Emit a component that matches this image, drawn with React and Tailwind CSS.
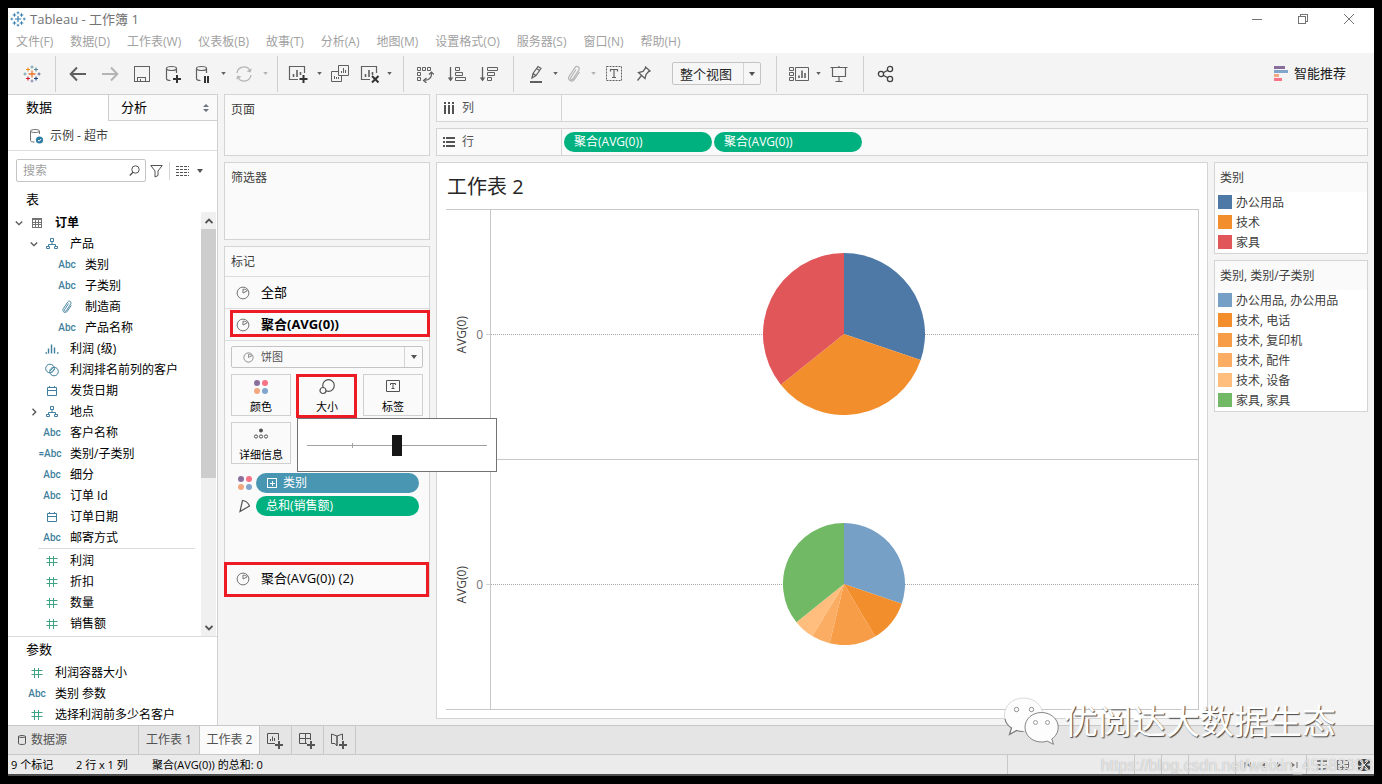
import { useState } from "react";
import clsx from "clsx";

const MENUS = [
  "文件(F)",
  "数据(D)",
  "工作表(W)",
  "仪表板(B)",
  "故事(T)",
  "分析(A)",
  "地图(M)",
  "设置格式(O)",
  "服务器(S)",
  "窗口(N)",
  "帮助(H)",
];

const DIMENSIONS = [
  { label: "订单", icon: "table", level: 0, open: true, bold: true },
  { label: "产品", icon: "hierarchy", level: 1, open: true },
  { label: "类别", icon: "abc", level: 2 },
  { label: "子类别", icon: "abc", level: 2 },
  { label: "制造商", icon: "clip", level: 2 },
  { label: "产品名称", icon: "abc", level: 2 },
  { label: "利润 (级)", icon: "bins", level: 1 },
  { label: "利润排名前列的客户", icon: "set", level: 1 },
  { label: "发货日期", icon: "date", level: 1 },
  { label: "地点", icon: "hierarchy", level: 1, open: false },
  { label: "客户名称", icon: "abc", level: 1 },
  { label: "类别/子类别", icon: "calcAbc", level: 1 },
  { label: "细分", icon: "abc", level: 1 },
  { label: "订单 Id", icon: "abc", level: 1 },
  { label: "订单日期", icon: "date", level: 1 },
  { label: "邮寄方式", icon: "abc", level: 1 },
];

const MEASURES = ["利润", "折扣", "数量", "销售额"].map((label) => ({
  label,
  icon: "number",
  level: 1,
}));

const PARAMETERS = [
  { label: "利润容器大小", icon: "number", level: 0 },
  { label: "类别 参数", icon: "abc", level: 0 },
  { label: "选择利润前多少名客户", icon: "number", level: 0 },
];

const CATEGORY_LEGEND = [
  { label: "办公用品", color: "#4e79a7" },
  { label: "技术", color: "#f28e2b" },
  { label: "家具", color: "#e15759" },
];

const SUBCATEGORY_LEGEND = [
  { label: "办公用品, 办公用品", color: "#76a0c6" },
  { label: "技术, 电话", color: "#f28e2b" },
  { label: "技术, 复印机", color: "#f79d48" },
  { label: "技术, 配件", color: "#fbad63" },
  { label: "技术, 设备", color: "#ffbe7d" },
  { label: "家具, 家具", color: "#72b966" },
];

// slice ends, in degrees clockwise from 12 o'clock
const CATEGORY_SLICES = [
  { end: 108.8, color: "#4e79a7" },
  { end: 231.3, color: "#f28e2b" },
  { end: 360, color: "#e15759" },
];

const SUBCATEGORY_SLICES = [
  { end: 108.8, color: "#76a0c6" },
  { end: 149.3, color: "#f28e2b" },
  { end: 193.6, color: "#f79d48" },
  { end: 211.4, color: "#fbad63" },
  { end: 231.3, color: "#ffbe7d" },
  { end: 360, color: "#72b966" },
];

const INDENT = ["pl-1", "pl-[19px]", "pl-[34px]"];

/* ---------- icons ---------- */

function Svg({ w = 18, h = 18, crisp, children, ...rest }) {
  return (
    <svg
      width={w}
      height={h}
      viewBox={`0 0 ${w} ${h}`}
      fill="none"
      stroke="currentColor"
      shapeRendering={crisp ? "crispEdges" : undefined}
      aria-hidden="true"
      className="shrink-0"
      {...rest}
    >
      {children}
    </svg>
  );
}

function TableauMark({ mono, size = 18 }) {
  const c = (color) => (mono ? "#2f7cab" : color);
  return (
    <svg width={size} height={size} viewBox="0 0 18 18" fill="none" aria-hidden="true" className="shrink-0">
      <path d="M9 5.5v7M5.5 9h7" stroke={c("#e8762b")} strokeWidth="1.3" />
      <path d="M5 2.5v4M3 4.5h4" stroke={c("#eb912c")} strokeWidth="1.1" />
      <path d="M13 2.5v4M11 4.5h4" stroke={c("#59879b")} strokeWidth="1.1" />
      <path d="M5 11.5v4M3 13.5h4" stroke={c("#c72035")} strokeWidth="1.1" />
      <path d="M13 11.5v4M11 13.5h4" stroke={c("#1f447e")} strokeWidth="1.1" />
      <path d="M9 .5v3M7.5 2h3" stroke={c("#7199a6")} />
      <path d="M9 14.5v3M7.5 16h3" stroke={c("#7b84b0")} />
      <path d="M2 7.5v3M.5 9h3" stroke={c("#6fa0ab")} />
      <path d="M16 7.5v3M14.5 9h3" stroke={c("#5c6692")} />
    </svg>
  );
}

function CaretIcon({ small }) {
  return (
    <svg
      width={small ? 5 : 6}
      height={small ? 3 : 4}
      viewBox="0 0 6 4"
      fill="currentColor"
      aria-hidden="true"
      className="shrink-0"
    >
      <path d="M0 0h6L3 4z" />
    </svg>
  );
}

function ArrowIcon({ flip }) {
  return (
    <Svg strokeWidth="2">
      <path d={flip ? "M1 9h15M10 2.500l6.300 6.500-6.300 6.500" : "M17 9H2M8 2.500L1.700 9 8 15.500"} />
    </Svg>
  );
}

function SaveIcon() {
  return (
    <Svg crisp>
      <path d="M1.5 1.5h15v15h-15zM4.500 16.500v-4h8v4M7 14v2.500" />
    </Svg>
  );
}

function Cylinder() {
  return (
    <path d="M11.500 8V3.500c0-1.100-2.200-2-5-2s-5 .9-5 2v10c0 1.100 1.500 2 4 2M1.500 3.500c0 1.100 2.200 2 5 2s5-.9 5-2" strokeWidth="1.2" />
  );
}

function AddSourceIcon() {
  return (
    <Svg>
      <Cylinder />
      <path d="M12 10v8M8 14h8" stroke="#333" strokeWidth="2" />
    </Svg>
  );
}

function PauseSourceIcon() {
  return (
    <Svg>
      <Cylinder />
      <path d="M10 11v7M13 11v7" stroke="#333" strokeWidth="2" />
    </Svg>
  );
}

function RefreshIcon() {
  return (
    <Svg strokeWidth="1.3">
      <path d="M2 8a7 7 0 0 1 13-2.500M16 10a7 7 0 0 1-13 2.500" />
      <path d="M16.800 3.500l-1.300 4-4-1.200zM1.200 14.500l1.300-4 4 1.200z" fill="currentColor" stroke="none" />
    </Svg>
  );
}

function SheetIcon({ mark }) {
  return (
    <Svg w={20} h={18}>
      <path d="M16.500 8V1.500h-15v13H10" strokeWidth="1.2" />
      <path d="M5.500 12V9M9 12V5M12.500 10V7" strokeWidth="1.6" />
      {mark === "x" ? (
        <path d="M12 11l6.500 6.500M18.500 11L12 17.500" stroke="#333" strokeWidth="2" />
      ) : (
        <path d="M15.500 10v8M11.500 14h8" stroke="#333" strokeWidth="2" />
      )}
    </Svg>
  );
}

function DuplicateIcon() {
  return (
    <Svg>
      <path d="M7.500.5h10v10h-10zM7 6.500H.5v10h10V11" />
      <path d="M10.500 8V6M12.500 8V3M14.500 8V5M3.500 14v-3M5.500 14v-2M7.500 14v-2" />
    </Svg>
  );
}

function SwapIcon() {
  return (
    <Svg>
      <path d="M1.500 2.500h3v3h-3zM6.500 2.500h3v3h-3zM11.500 2.500h3v3h-3zM1.500 7.500h3v3h-3zM1.500 12.500h3v3h-3z" />
      <path d="M15.500 8c.3 4-2 7-7 7.500M13 9.500L15.500 7 18 9.500M10.500 13l-3 2.500 3 2.500" strokeWidth="1.2" />
    </Svg>
  );
}

function SortIcon({ desc }) {
  return (
    <Svg w={20}>
      <path d="M3.500 2v13" strokeWidth="1.3" />
      <path d="M.8 12.500h5.400L3.500 16.500z" fill="currentColor" stroke="none" />
      <path
        d={
          desc
            ? "M8.500 2.500h10v3h-10zM8.500 7.500h7v3h-7zM8.500 12.500h4v3h-4z"
            : "M8.500 2.500h4v3h-4zM8.500 7.500h7v3h-7zM8.500 12.500h10v3h-10z"
        }
      />
    </Svg>
  );
}

function PenIcon() {
  return (
    <Svg>
      <path d="M5 13l1-4.500L11 1.500l3 2-5 7L5 13zM6 8.500l3 2M9.500 3.500l3 2" strokeWidth="1.2" />
      <path d="M3 17h12" strokeWidth="2" />
    </Svg>
  );
}

function ClipIcon({ size = 18 }) {
  return (
    <Svg w={size} h={size} viewBox="0 0 18 18" strokeWidth="1.2">
      <path d="M11 4.500l-5.200 8c-1 1.700 1.200 3 2.200 1.400l5.800-8.800c1.600-2.800-2-5.100-3.900-2.500L4.200 11.200c-2.200 3.600 2.600 7 5.200 3.200L14.500 7" />
    </Svg>
  );
}

function TextBoxIcon() {
  return (
    <Svg>
      <rect x="1.500" y="1.500" width="15" height="14" strokeDasharray="2 1" />
      <path d="M5.500 6.500v-2h7v2M9 4.500v8M7 12.500h4" strokeWidth="1.2" />
    </Svg>
  );
}

function PinIcon() {
  return (
    <Svg>
      <path d="M10 1.500l5.500 5M11 2.500L8 6.500 3.500 7.500l6.500 6L11 9.500l3.500-4M6.500 10.500L2.500 15.500" strokeWidth="1.3" />
    </Svg>
  );
}

function CardsIcon() {
  return (
    <Svg w={20} h={16}>
      <path d="M.5 1.500h4v3h-4zM.5 6.500h4v3h-4zM.5 11.500h4v3h-4zM6.500 1.500h13v13h-13z" />
      <path d="M10 12V9.500M13 12V4.500M16 12V7" strokeWidth="1.6" />
    </Svg>
  );
}

function PresentIcon() {
  return (
    <Svg>
      <path d="M.5 2.500h17M2.500 2.500v9h13v-9M9 11.500v5M5.500 16.500h7M9 1v1" strokeWidth="1.2" />
    </Svg>
  );
}

function ShareIcon() {
  return (
    <Svg strokeWidth="1.3">
      <circle cx="4" cy="9" r="2.600" />
      <circle cx="13" cy="4" r="2.600" />
      <circle cx="13" cy="14" r="2.600" />
      <path d="M6.200 7.700l4.600-2.500M6.200 10.300l4.600 2.500" />
    </Svg>
  );
}

function PieIcon({ size = 14 }) {
  return (
    <Svg w={size} h={size} viewBox="0 0 14 14">
      <circle cx="7" cy="7" r="5.900" />
      <path d="M7 7V3.200c2 0 3.700.6 4.300 1.600L7 7z" />
    </Svg>
  );
}

function ColorDots() {
  return (
    <svg width="16" height="16" viewBox="0 0 16 16" aria-hidden="true" className="shrink-0">
      <circle cx="4" cy="4" r="3" fill="#8a6f9c" />
      <circle cx="12" cy="4" r="3" fill="#fa7285" />
      <circle cx="4" cy="12" r="3" fill="#f2a77f" />
      <circle cx="12" cy="12" r="3" fill="#82a5cc" />
    </svg>
  );
}

function SizeIcon() {
  return (
    <Svg w={16} h={16}>
      <circle cx="9.500" cy="6.500" r="5.800" strokeWidth="1.2" />
      <circle cx="4" cy="11.500" r="3" fill="#fafafa" strokeWidth="1.2" />
    </Svg>
  );
}

function LabelIcon() {
  return (
    <Svg w={14} h={14}>
      <path d="M.5 1.500h13v11h-13z" />
      <path d="M4.500 6V4.500h5V6M7 4.500v5M5.500 9.500h3" />
    </Svg>
  );
}

function DetailIcon() {
  return (
    <Svg w={16} h={14}>
      <circle cx="8" cy="3.500" r="2" fill="currentColor" stroke="none" />
      <circle cx="3" cy="9.500" r="1.600" />
      <circle cx="8" cy="9.500" r="1.600" />
      <circle cx="13" cy="9.500" r="1.600" />
    </Svg>
  );
}

function AngleIcon() {
  return (
    <Svg w={14} h={14}>
      <path d="M4.500 1.500L2 12.500l9.500-5.500C10 3.500 7.500 1.800 4.500 1.500z" strokeWidth="1.2" />
    </Svg>
  );
}

function ChevronIcon({ open }) {
  return (
    <Svg w={8} h={8} strokeWidth="1.3" className="shrink-0 text-neutral-600">
      <path d={open ? "M.8 2.500L4 5.700l3.200-3.200" : "M2.500.8L5.700 4 2.500 7.200"} />
    </Svg>
  );
}

function FieldIcon({ type }) {
  switch (type) {
    case "abc":
      return <span className="font-[Roboto] text-[10px] font-medium text-[#3f7f9d]">Abc</span>;
    case "calcAbc":
      return <span className="-ml-1 font-[Roboto] text-[10px] font-medium text-[#3f7f9d]">=Abc</span>;
    case "number":
      return (
        <Svg w={12} h={12} className="text-[#42a284]">
          <path d="M3.500 1v10M7.500 1v10M.5 3.500h11M.5 7.500h11" />
        </Svg>
      );
    case "date":
      return (
        <Svg w={12} h={12} className="text-[#3f7f9d]">
          <path d="M1.500 2.500h9v8h-9zM1.500 5.500h9M3.500 1v2M8.500 1v2" />
        </Svg>
      );
    case "hierarchy":
      return (
        <Svg w={12} h={12} className="text-[#3f7f9d]">
          <path d="M4.500.5h3v3h-3zM.5 8.500h3v2h-3zM8.500 8.500h3v2h-3zM6 3.500v3M2.500 8V6.500h7V8" />
        </Svg>
      );
    case "bins":
      return (
        <Svg w={14} h={12} className="text-[#3f7f9d]">
          <path d="M.5 10h1.500M3.500 10.500v-5M6.500 10.500v-9M9.500 10.500v-6M12 10h1.500" strokeWidth="1.4" />
        </Svg>
      );
    case "set":
      return (
        <Svg w={14} h={14} className="text-[#3f7f9d]">
          <circle cx="5" cy="5.500" r="4.300" />
          <circle cx="9" cy="8.500" r="4.300" />
          <path d="M5 8l4-4M6 9.500L10 5.500" strokeWidth=".8" />
        </Svg>
      );
    case "clip":
      return (
        <span className="text-[#3f7f9d]">
          <ClipIcon size={14} />
        </span>
      );
    default:
      return (
        <Svg w={12} h={12} crisp className="text-neutral-500">
          <path d="M1.500 1.500h9v9h-9zM1 2.500h10M1.500 5.500h9M1.500 7.500h9M4.500 3v8M7.500 3v8" />
        </Svg>
      );
  }
}

function NewTabIcon({ kind }) {
  return (
    <Svg w={17} h={17}>
      {kind === "sheet" && <path d="M11.500 8V1.500H.5v10H8M3.500 9V7M5.500 9V4.500M7.500 9V6" />}
      {kind === "dashboard" && <path d="M11.500 8V1.500H.5v10H8M.5 6.500h11M6.500 1.500v10" />}
      {kind === "story" && <path d="M6 4L.5 2v9.500H4L6 14zM6 4l5.500-2v6M6 4v9" />}
      <path d="M12 9v8M8 13h8" stroke="#555" strokeWidth="2" />
    </Svg>
  );
}

/* ---------- chrome ---------- */

function TitleBar() {
  return (
    <header className="bg-white text-neutral-400">
      <div className="flex h-[22px] items-center pl-[2px]">
        <TableauMark mono size={16} />
        <h1 className="ml-1 text-[13px] leading-5 text-neutral-500">Tableau - 工作簿 1</h1>
        <div className="ml-auto flex items-center pr-0.5 text-neutral-500">
          <button type="button" aria-label="最小化" className="flex w-[46px] justify-center">
            <Svg w={10} h={10} crisp><path d="M0 5.500h10" /></Svg>
          </button>
          <button type="button" aria-label="还原" className="flex w-[46px] justify-center">
            <Svg w={10} h={10} crisp><path d="M.5 2.500h7v7h-7zM2.500 2.500v-2h7v7h-2" /></Svg>
          </button>
          <button type="button" aria-label="关闭" className="flex w-[46px] justify-center">
            <Svg w={10} h={10}><path d="M0 0l10 10M10 0L0 10" /></Svg>
          </button>
        </div>
      </div>
      <nav className="flex h-[23px] items-center gap-[17px] pt-px pl-2 text-xs">
        {MENUS.map((menu) => (
          <button key={menu} type="button">{menu}</button>
        ))}
      </nav>
    </header>
  );
}

function Tool({ label, narrow, muted, children }) {
  return (
    <button
      type="button"
      aria-label={label}
      className={clsx("flex h-8 items-center justify-center", narrow ? "w-7" : "w-8", muted && "text-[#b4b4b4]")}
    >
      {children}
    </button>
  );
}

function ToolCaret({ label, muted }) {
  return (
    <button
      type="button"
      aria-label={label}
      className={clsx("flex h-8 w-2.5 items-center justify-center", muted && "text-[#b4b4b4]")}
    >
      <CaretIcon small />
    </button>
  );
}

function ToolGroup({ className, children }) {
  return <div className={clsx("flex h-9 items-center border-r border-[#cfcfcf]", className)}>{children}</div>;
}

function Toolbar() {
  return (
    <div className="flex h-[41px] items-center bg-[#f4f4f4] text-[#606060]">
      <ToolGroup className="w-12 justify-center">
        <TableauMark />
      </ToolGroup>
      <ToolGroup className="pr-[7px] pl-1.5">
        <Tool label="撤消"><ArrowIcon /></Tool>
        <Tool label="重做" muted><ArrowIcon flip /></Tool>
        <Tool label="保存"><SaveIcon /></Tool>
        <Tool label="新建数据源"><AddSourceIcon /></Tool>
        <Tool label="暂停自动更新" narrow><PauseSourceIcon /></Tool>
        <ToolCaret label="自动更新选项" />
        <Tool label="运行更新" muted><RefreshIcon /></Tool>
        <ToolCaret label="更新选项" muted />
      </ToolGroup>
      <ToolGroup className="pr-[9px] pl-1">
        <Tool label="新建工作表"><SheetIcon mark="plus" /></Tool>
        <ToolCaret label="新建选项" />
        <Tool label="复制"><DuplicateIcon /></Tool>
        <Tool label="清除工作表" narrow><SheetIcon mark="x" /></Tool>
        <ToolCaret label="清除选项" />
      </ToolGroup>
      <ToolGroup className="pr-2 pl-[5px]">
        <Tool label="交换行和列"><SwapIcon /></Tool>
        <Tool label="升序排序"><SortIcon /></Tool>
        <Tool label="降序排序"><SortIcon desc /></Tool>
      </ToolGroup>
      <ToolGroup className="pr-[15px] pl-2">
        <Tool label="突出显示" narrow><PenIcon /></Tool>
        <ToolCaret label="突出显示选项" />
        <Tool label="组成员" narrow muted><ClipIcon /></Tool>
        <ToolCaret label="分组选项" muted />
        <Tool label="显示标记标签"><TextBoxIcon /></Tool>
        <Tool label="固定轴" narrow><PinIcon /></Tool>
        <div className="relative ml-3.5 text-neutral-600">
          <select
            aria-label="适合"
            className="block h-[23px] w-[89px] appearance-none rounded-xs border border-[#c4c4c4] bg-[#f6f6f6] pl-[7px] text-[13px] leading-5 text-neutral-800"
          >
            <option>整个视图</option>
          </select>
          <span className="pointer-events-none absolute inset-y-px right-px flex w-[17px] items-center justify-center border-l border-neutral-300">
            <CaretIcon />
          </span>
        </div>
      </ToolGroup>
      <ToolGroup className="pr-2 pl-2">
        <Tool label="显示/隐藏功能区" narrow><CardsIcon /></Tool>
        <ToolCaret label="功能区选项" />
        <Tool label="演示模式"><PresentIcon /></Tool>
      </ToolGroup>
      <div className="pl-1.5 text-neutral-700">
        <Tool label="共享"><ShareIcon /></Tool>
      </div>
      <button type="button" className="mr-7 ml-auto flex items-center gap-1.5 text-[13px] text-neutral-900">
        <svg width="14" height="15" viewBox="0 0 14 15" aria-hidden="true">
          <path d="M0 0h11v3H0z" fill="#8a6f9c" />
          <path d="M0 4h14v3H0z" fill="#82a5cc" />
          <path d="M0 8h5v3H0z" fill="#f2a77f" />
          <path d="M0 12h8v3H0z" fill="#fa7285" />
        </svg>
        智能推荐
      </button>
    </div>
  );
}

/* ---------- data pane ---------- */

function FieldRow({ field }) {
  return (
    <li className={clsx("flex h-[21px] items-center", INDENT[field.level])}>
      <span className="flex w-3.5 shrink-0 justify-center">
        {field.open !== undefined && <ChevronIcon open={field.open} />}
      </span>
      <span className="flex w-[22px] shrink-0 justify-center whitespace-nowrap">
        <FieldIcon type={field.icon} />
      </span>
      <span className={clsx("ml-[7px] whitespace-nowrap", field.bold && "font-bold")}>{field.label}</span>
    </li>
  );
}

function DataPane() {
  return (
    <aside className="flex w-[210px] shrink-0 flex-col border-t border-r border-[#d0d0d0] bg-white text-xs text-black">
      <div className="flex h-[26px] text-[13px]">
        <button type="button" className="w-[100px] pl-[18px] text-left">数据</button>
        <button
          type="button"
          className="flex flex-1 items-center justify-between border-b border-l border-[#d0d0d0] bg-[#fafafa] pr-2 pl-3"
        >
          分析
          <svg width="6" height="8" viewBox="0 0 6 8" fill="#6b7280" aria-hidden="true">
            <path d="M3 0l3 3H0zM3 8L0 5h6z" />
          </svg>
        </button>
      </div>
      <div className="flex h-[30px] items-center gap-1.5 border-b border-[#dcdcdc] pl-[22px] text-neutral-700">
        <Svg w={14} h={16} className="shrink-0 text-neutral-500">
          <path d="M9.500 6V3c0-.8-2-1.500-4.500-1.500S.5 2.200.5 3v9.500c0 1 1.500 1.500 4 1.500M.5 3c0 1 2 1.500 4.500 1.500S9.500 4 9.500 3" />
          <circle cx="9.500" cy="12" r="3.600" fill="#2f7ca3" stroke="none" />
          <path d="M8 12l1.200 1.200 2-2.200" stroke="#fff" />
        </Svg>
        示例 - 超市
      </div>
      <div className="flex items-center pt-2 pl-2">
        <div className="relative">
          <input
            type="search"
            aria-label="搜索"
            placeholder="搜索"
            className="block h-[23px] w-[130px] rounded-xs border border-[#c4c4c4] pr-6 pl-1.5 placeholder:text-neutral-400"
          />
          <span className="pointer-events-none absolute inset-y-0 right-1.5 flex items-center text-neutral-600">
            <Svg w={11} h={11}>
              <circle cx="6.500" cy="4.500" r="3.700" />
              <path d="M4 7.200L.8 10.500" strokeWidth="1.3" />
            </Svg>
          </span>
        </div>
        <button type="button" aria-label="筛选" className="ml-1 text-neutral-600">
          <Svg w={13} h={14}><path d="M.8 1.500h11.400L8 7v4.500l-3 1.500V7z" /></Svg>
        </button>
        <button type="button" aria-label="视图" className="ml-1.5 flex h-[18px] items-center gap-2 border-l border-neutral-300 pl-1.5 text-neutral-600">
          <Svg w={13} h={10} crisp>
            <path d="M0 .5h13M0 3.500h13M0 6.500h13M0 9.500h13" strokeDasharray="3 1" />
          </Svg>
          <CaretIcon />
        </button>
      </div>
      <h2 className="flex h-[30px] items-center pt-1.5 pl-[18px] text-[13px]">表</h2>
      <div className="flex flex-1">
        <div className="flex-1">
          <ul>
            {DIMENSIONS.map((field) => <FieldRow key={field.label} field={field} />)}
          </ul>
          <ul className="mr-1.5 ml-[30px] border-t border-[#dcdcdc]" />
          <ul className="pt-px">
            {MEASURES.map((field) => <FieldRow key={field.label} field={field} />)}
          </ul>
        </div>
        <div className="mr-px flex w-[15px] shrink-0 flex-col items-center bg-[#f0f0f0] text-neutral-600">
          <span className="flex h-[17px] items-center">
            <Svg w={8} h={8} strokeWidth="1.8"><path d="M.5 6L4 2.500 7.500 6" /></Svg>
          </span>
          <span className="h-[249px] w-full bg-[#cdcdcd]" />
          <span className="mt-auto flex h-[17px] items-center">
            <Svg w={8} h={8} strokeWidth="1.8"><path d="M.5 2L4 5.500 7.500 2" /></Svg>
          </span>
        </div>
      </div>
      <section className="border-t border-[#dcdcdc]">
        <h2 className="flex h-[25px] items-center pl-[18px] text-[13px]">参数</h2>
        <ul>
          {PARAMETERS.map((field) => <FieldRow key={field.label} field={field} />)}
        </ul>
      </section>
    </aside>
  );
}

/* ---------- cards ---------- */

function MarkButton({ label, icon, highlight }) {
  return (
    <button
      type="button"
      className="relative flex h-[42px] w-[60px] flex-col items-center justify-between border border-[#d0d0d0] pt-1 text-neutral-600"
    >
      {icon}
      <span className="text-[11px] leading-4 text-black">{label}</span>
      {highlight && <span className="absolute -top-px -right-px -bottom-[3px] -left-0.5 border-3 border-[#ed1c24]" />}
    </button>
  );
}

function SizePopup({ value, onChange }) {
  return (
    <div className="absolute top-[44px] left-[66px] z-10 flex h-[54px] w-[200px] items-center border border-neutral-500 bg-white px-[9px]">
      <div className="relative flex w-full items-center">
        <span className="absolute inset-x-0 h-px bg-neutral-400" />
        <span className="absolute left-1/4 h-[5px] w-px bg-neutral-400" />
        <input
          type="range"
          aria-label="大小"
          min="0"
          max="100"
          value={value}
          onChange={(e) => onChange(e.target.value)}
          className="relative m-0 h-[22px] w-full appearance-none bg-transparent [&::-webkit-slider-thumb]:h-[21px] [&::-webkit-slider-thumb]:w-[10px] [&::-webkit-slider-thumb]:appearance-none [&::-webkit-slider-thumb]:rounded-none [&::-webkit-slider-thumb]:bg-[#161616]"
        />
      </div>
    </div>
  );
}

function MarksCard() {
  const [size, setSize] = useState("50");
  return (
    <section className="border border-[#d4d4d4] bg-[#fafafa]">
      <h2 className="flex h-[30px] items-center border-b border-[#dcdcdc] pl-1.5">标记</h2>
      <button type="button" className="flex h-8 w-full items-center gap-[11px] border-b border-[#dcdcdc] pl-[11px] text-[13px] text-neutral-500">
        <PieIcon />
        <span className="text-black">全部</span>
      </button>
      <button type="button" className="relative flex h-8 w-full items-center gap-[11px] border-b border-[#dcdcdc] pl-[11px] text-[13px] font-bold text-neutral-500">
        <PieIcon />
        <span className="text-black">聚合(AVG(0))</span>
        <span className="absolute top-px -right-px bottom-[3px] left-[5px] border-3 border-[#ed1c24]" />
      </button>
      <div className="px-1.5 pt-[5px]">
        <div className="relative text-neutral-600">
          <select
            aria-label="标记类型"
            className="block h-[22px] w-full appearance-none rounded-xs border border-[#c4c4c4] bg-[#fafafa] pl-[29px] text-[11px] text-neutral-600"
          >
            <option>饼图</option>
          </select>
          <span className="pointer-events-none absolute inset-y-0 left-3 flex items-center text-neutral-500">
            <PieIcon size={11} />
          </span>
          <span className="pointer-events-none absolute inset-y-px right-px flex w-[18px] items-center justify-center border-l border-neutral-300">
            <CaretIcon />
          </span>
        </div>
        <div className="relative mt-1.5 flex flex-wrap gap-1.5">
          <MarkButton label="颜色" icon={<ColorDots />} />
          <MarkButton label="大小" icon={<SizeIcon />} highlight />
          <MarkButton label="标签" icon={<LabelIcon />} />
          <MarkButton label="详细信息" icon={<DetailIcon />} />
          <SizePopup value={size} onChange={setSize} />
        </div>
        <ul className="mt-[9px] mb-[46px] space-y-[3px] pr-1 pl-1.5 text-white">
          <li className="flex items-center gap-[3px]">
            <ColorDots />
            <button type="button" className="flex h-5 flex-1 items-center gap-1.5 rounded-full bg-[#4996b2] pl-[11px]">
              <Svg w={10} h={10} crisp><path d="M.5.5h9v9h-9zM5 2.500v5M2.500 5h5" /></Svg>
              类别
            </button>
          </li>
          <li className="flex items-center gap-[3px]">
            <span className="flex w-4 justify-center text-neutral-600"><AngleIcon /></span>
            <button type="button" className="flex h-5 flex-1 items-center rounded-full bg-[#00b180] pl-2.5">
              总和(销售额)
            </button>
          </li>
        </ul>
      </div>
      <button type="button" className="relative flex h-[34px] w-full items-center gap-[11px] pl-[11px] text-[13px] text-neutral-500">
        <PieIcon />
        <span className="text-black">聚合(AVG(0)) (2)</span>
        <span className="absolute top-0 right-0 -bottom-px -left-px border-3 border-[#ed1c24]" />
      </button>
    </section>
  );
}

function CardColumn() {
  return (
    <div className="flex w-[206px] shrink-0 flex-col gap-1.5 text-xs text-neutral-700">
      <section className="h-[62px] border border-[#d4d4d4] bg-[#fafafa] pt-[7px] pl-1.5">
        <h2>页面</h2>
      </section>
      <section className="h-[78px] border border-[#d4d4d4] bg-[#fafafa] pt-[7px] pl-1.5">
        <h2>筛选器</h2>
      </section>
      <MarksCard />
    </div>
  );
}

/* ---------- view ---------- */

function Shelf({ label, icon, pills = [] }) {
  return (
    <section className="flex h-7 border border-[#d4d4d4] bg-[#fafafa] text-xs">
      <h2 className="flex w-[125px] items-center gap-[7px] border-r border-[#d4d4d4] pl-1.5 text-neutral-600">
        {icon}
        {label}
      </h2>
      <div className="flex items-center gap-0.5 pl-0.5">
        {pills.map((pill, i) => (
          <button key={i} type="button" className="h-5 w-[148px] rounded-full bg-[#00b180] pl-2.5 text-left text-white">
            {pill}
          </button>
        ))}
      </div>
    </section>
  );
}

function Pie({ radius, slices }) {
  const point = (deg) => {
    const rad = (deg * Math.PI) / 180;
    return `${radius + radius * Math.sin(rad)} ${radius - radius * Math.cos(rad)}`;
  };
  return (
    <svg width={radius * 2} height={radius * 2} className="relative" role="img" aria-label="饼图">
      {slices.map(({ end, color }, i) => {
        const start = i === 0 ? 0 : slices[i - 1].end;
        return (
          <path
            key={color}
            d={`M${radius} ${radius}L${point(start)}A${radius} ${radius} 0 ${end - start > 180 ? 1 : 0} 1 ${point(end)}Z`}
            fill={color}
          />
        );
      })}
    </svg>
  );
}

function ChartRow({ radius, slices }) {
  return (
    <div className="flex flex-1 border-b border-[#c8c8c8]">
      <div className="flex w-[45px] items-center border-r border-[#c8c8c8] text-xs text-neutral-700">
        <span className="ml-2 rotate-180 [writing-mode:vertical-rl]">AVG(0)</span>
        <span className="ml-auto pr-[3px] text-neutral-500">0</span>
        <span className="h-px w-1 bg-neutral-300" />
      </div>
      <div className="relative flex flex-1 items-center justify-center border-r border-[#c8c8c8] pr-px pb-px">
        <span className="absolute inset-x-0 border-t border-dotted border-[#a8a8a8]" />
        <Pie radius={radius} slices={slices} />
      </div>
    </div>
  );
}

function Legend({ title, items }) {
  return (
    <section className="border border-[#d4d4d4] bg-white pb-px text-xs text-neutral-700">
      <h2 className="flex h-[29px] items-center bg-[#fafafa] pl-[5px]">{title}</h2>
      <ul>
        {items.map((item) => (
          <li key={item.label} className="flex h-5 items-center gap-1 pl-[3px]">
            <span className="size-3.5" style={{ backgroundColor: item.color }} />
            <span className="pt-px">{item.label}</span>
          </li>
        ))}
      </ul>
    </section>
  );
}

function Workspace() {
  return (
    <main className="flex min-w-0 flex-1 flex-col gap-1.5">
      <Shelf
        label="列"
        icon={<Svg w={12} h={12} crisp strokeWidth="2"><path d="M2 0v2M2 3v9M6 0v2M6 3v9M10 0v2M10 3v9" /></Svg>}
      />
      <Shelf
        label="行"
        icon={<Svg w={12} h={12} crisp strokeWidth="2"><path d="M0 2h2M3 2h9M0 6h2M3 6h9M0 10h2M3 10h9" /></Svg>}
        pills={["聚合(AVG(0))", "聚合(AVG(0))"]}
      />
      <div className="flex flex-1 items-stretch gap-1.5">
        <section className="mb-1.5 flex flex-1 flex-col border border-[#d4d4d4] bg-white pr-2 pb-2 pl-[9px]">
          <h2 className="flex h-[46px] items-center pt-0.5 pl-px text-xl text-neutral-800">工作表 2</h2>
          <div className="flex flex-1 flex-col border-t border-[#c8c8c8]">
            <ChartRow radius={81} slices={CATEGORY_SLICES} />
            <ChartRow radius={61} slices={SUBCATEGORY_SLICES} />
          </div>
        </section>
        <div className="flex w-[154px] shrink-0 flex-col gap-1.5">
          <Legend title="类别" items={CATEGORY_LEGEND} />
          <Legend title="类别, 类别/子类别" items={SUBCATEGORY_LEGEND} />
        </div>
      </div>
    </main>
  );
}

/* ---------- footer ---------- */

function SheetTabs() {
  return (
    <div className="flex h-[30px] border-t border-b border-[#c8c8c8] bg-[#e5e5e5] text-xs text-neutral-600">
      <button type="button" className="flex w-[131px] items-center gap-[3px] border-r border-[#c8c8c8] pl-2">
        <Svg w={12} h={12}>
          <path d="M2.500 2.500c0-1.300 7-1.300 7 0v7c0 1.300-7 1.300-7 0zM2.500 2.500c0 1.300 7 1.300 7 0" />
        </Svg>
        数据源
      </button>
      <button type="button" className="w-[61px] border-r border-[#c8c8c8]">工作表 1</button>
      <button type="button" className="w-[60px] border-r border-[#c8c8c8] bg-[#fafafa]">工作表 2</button>
      <button type="button" aria-label="新建工作表" className="flex w-8 items-center justify-center border-r border-[#c8c8c8]">
        <NewTabIcon kind="sheet" />
      </button>
      <button type="button" aria-label="新建仪表板" className="flex w-8 items-center justify-center border-r border-[#c8c8c8]">
        <NewTabIcon kind="dashboard" />
      </button>
      <button type="button" aria-label="新建故事" className="flex w-8 items-center justify-center border-r border-[#c8c8c8]">
        <NewTabIcon kind="story" />
      </button>
    </div>
  );
}

function StatusBar() {
  return (
    <footer className="flex h-[21px] items-center border-b-2 border-[#4d4d4d] bg-[#ebebeb] text-[11px] text-black">
      <span className="w-[68px] pt-0.5 pl-[3px]">9 个标记</span>
      <span className="w-[76px] pt-0.5">2 行 x 1 列</span>
      <span className="pt-0.5">聚合(AVG(0)) 的总和: 0</span>
      <div className="ml-auto flex h-full text-neutral-500">
        <span className="w-[127px] border-l border-[#c8c8c8]" />
        <span className="w-[27px] border-l border-[#c8c8c8]" />
        <span className="w-[27px] border-l border-[#c8c8c8]" />
        <span className="w-[47px] border-l border-[#c8c8c8]" />
        <span className="flex w-[71px] items-center justify-around border-l border-[#c8c8c8] pr-1 pl-1">
          <Svg w={8} h={8}><path d="M1 1v6" /><path d="M7 1v6L3 4z" fill="currentColor" stroke="none" /></Svg>
          <Svg w={8} h={8}><path d="M6 1v6L2 4z" fill="currentColor" stroke="none" /></Svg>
          <Svg w={8} h={8}><path d="M2 1v6l4-3z" fill="currentColor" stroke="none" /></Svg>
          <Svg w={8} h={8}><path d="M7 1v6" /><path d="M1 1v6l4-3z" fill="currentColor" stroke="none" /></Svg>
        </span>
        <span className="flex w-[68px] items-center justify-around border-l border-[#c8c8c8] pl-1">
          <Svg w={12} h={12} crisp><path d="M1 2h4M7 2h4M1 6h4M7 6h4M1 10h4M7 10h4" strokeWidth="2" /></Svg>
          <Svg w={12} h={12} crisp><path d="M.5 1.500h11v9h-11zM1 5.500h10M1 8h10M5.500 1v10" /></Svg>
          <Svg w={12} h={12}>
            <path d="M0 0h12v12H0z" fill="#444" stroke="none" />
            <path d="M2 2l8 8M10 2l-8 8" stroke="#ebebeb" />
          </Svg>
        </span>
      </div>
    </footer>
  );
}

function Brand() {
  return (
    <div className="pointer-events-none absolute right-[38px] bottom-[31px] flex items-center gap-[5px]">
      <svg width="56" height="48" viewBox="0 0 56 48" aria-hidden="true">
        <g fill="#fdfdfd" stroke="#aaa" strokeWidth=".8">
          <path
            d="M20.500 1C9.700 1 1.500 8.500 1.500 18c0 5.500 2.800 10 7 13l-2 6.500 7-4c2.300.7 4.500 1 7 1 10.700 0 19.300-7 19.300-16.500S31.200 1 20.500 1z"
            stroke="#d0d0d0"
          />
          <path d="M2 22c.8 3.800 3.200 6.900 6.500 9l-2 6.500 7-4c2.300.7 4.500 1 7 1" stroke="#777" strokeWidth="1.2" />
          <path
            d="M38.500 15.500c-9.300 0-16.500 6.500-16.500 14.700S29.200 45 38.500 45c2 0 4-.3 5.800-.9l6.200 3.200-1.700-5.300c4-2.700 6.400-7 6.400-11.800 0-8.200-7.400-14.700-16.700-14.700z"
            stroke="#666"
          />
          <circle cx="13.500" cy="12.500" r="2.200" stroke="#777" />
          <circle cx="28.500" cy="12.500" r="2.200" stroke="#777" />
          <circle cx="32.500" cy="25.500" r="2" stroke="#888" />
          <circle cx="44.500" cy="25.500" r="2" stroke="#888" />
        </g>
      </svg>
      <span className="text-[34px] leading-10 text-white [text-shadow:1px_1px_1px_#444]">优阅达大数据生态</span>
    </div>
  );
}

export default function App() {
  return (
    <div className="min-h-screen bg-black p-2 font-['Open_Sans','Noto_Sans_CJK_SC',sans-serif]">
      <div className="relative flex min-h-[calc(100vh-1rem)] flex-col">
        <TitleBar />
        <Toolbar />
        <div className="flex flex-1 bg-[#f4f4f4] pr-1.5">
          <DataPane />
          <div className="flex min-w-0 flex-1 gap-1.5 pl-1.5">
            <CardColumn />
            <Workspace />
          </div>
        </div>
        <SheetTabs />
        <StatusBar />
        <Brand />
        <span className="pointer-events-none absolute right-px bottom-0 text-base leading-5 font-['Liberation_Sans',sans-serif] text-white/70 [text-shadow:0_0_1px_#999]">
          https://blog.csdn.net/weixin_45588393
        </span>
      </div>
    </div>
  );
}
